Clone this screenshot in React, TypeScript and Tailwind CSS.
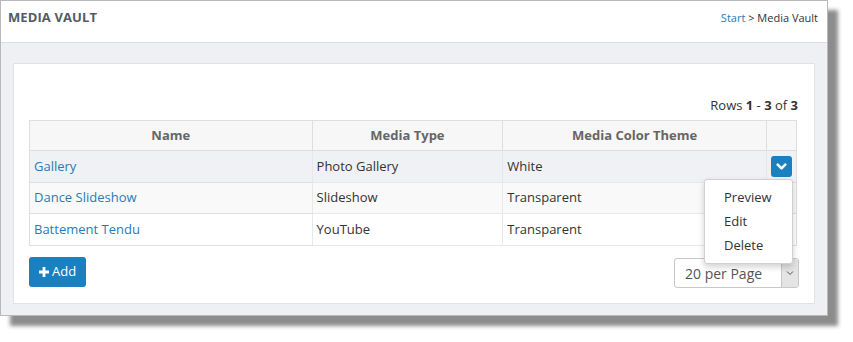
import { useState } from "react";

const rows = [
  { name: "Gallery", type: "Photo Gallery", theme: "White" },
  { name: "Dance Slideshow", type: "Slideshow", theme: "Transparent" },
  { name: "Battement Tendu", type: "YouTube", theme: "Transparent" },
];

const rowBg = ["bg-[#f0f1f5] h-[32px]", "bg-[#f9f9f9] h-[31px]", "bg-white h-[32px]"];

function Chevron({ className }: { className?: string }) {
  return (
    <svg viewBox="0 0 12 12" className={className} fill="none">
      <path d="M2.5 4.2 6 7.7 9.5 4.2" stroke="currentColor" strokeWidth="2.4" strokeLinecap="round" strokeLinejoin="round" />
    </svg>
  );
}

function App() {
  const [open] = useState(true);

  return (
    <div className="w-[853px] h-[342px] bg-white font-['Open_Sans',sans-serif] text-[13px] text-[#333]">
      <div className="w-[828px] h-[316px] border border-[#b9b9b9] bg-[#eff0f4] shadow-[10px_10px_4px_rgba(0,0,0,0.45)] flex flex-col">
        {/* header */}
        <div className="h-[42px] bg-white border-b border-[#dcdde2] flex items-center justify-between pl-[7px] pr-[9px] shrink-0">
          <h1 className="text-[13px] font-bold text-[#555a64] tracking-[0.1px] -mt-[8px]">MEDIA VAULT</h1>
          <div className="text-[11px] text-[#333] -mt-[6px]">
            <span className="text-[#2a7ab8]">Start</span> &gt; Media Vault
          </div>
        </div>

        {/* panel */}
        <div className="px-[12px] pt-[20px]">
          <div className="h-[241px] bg-white border border-[#e1e2e6] px-[15px] pt-[32px] relative">
            <div className="text-right text-[13px] h-[24px] pr-[1px]">
              Rows <b>1</b> - <b>3</b> of <b>3</b>
            </div>

            <table className="w-[768px] border-collapse text-[13px]">
              <thead>
                <tr className="bg-[#f7f7f7] h-[30px]">
                  <th className="w-[283px] border border-[#dedede] font-bold text-[#666]">Name</th>
                  <th className="w-[191px] border border-[#dedede] font-bold text-[#666]">Media Type</th>
                  <th className="w-[264px] border border-[#dedede] font-bold text-[#666]">Media Color Theme</th>
                  <th className="border border-[#dedede]"></th>
                </tr>
              </thead>
              <tbody>
                {rows.map((r, i) => (
                  <tr key={r.name} className={rowBg[i]}>
                    <td className="border-y border-l border-[#dedede] px-[4px] text-[#2a7ab8]">{r.name}</td>
                    <td className="border-y border-l border-[#e8e8e8] px-[4px]">{r.type}</td>
                    <td className="border-y border-x border-[#e8e8e8] px-[4px]">{r.theme}</td>
                    <td className="border-y border-r border-[#dedede] px-[4px]">
                      {i === 0 && (
                        <div className="w-[21px] h-[21px] bg-[#1a80bf] rounded-[3px] flex items-center justify-center text-white">
                          <Chevron className="w-[13px] h-[13px]" />
                        </div>
                      )}
                    </td>
                  </tr>
                ))}
              </tbody>
            </table>

            <div className="flex items-start justify-between mt-[11px]">
              <button className="h-[30px] px-[10px] bg-[#1a80bf] rounded-[3px] text-white text-[13px] flex items-center gap-[3px]">
                <svg viewBox="0 0 10 10" className="w-[10px] h-[10px]">
                  <path d="M3.6 0h2.8v3.6H10v2.8H6.4V10H3.6V6.4H0V3.6h3.6z" fill="currentColor" />
                </svg>
                Add
              </button>
              <div className="w-[125px] h-[30px] mt-[1px] border border-[#c8c8c8] rounded-[3px] flex overflow-hidden">
                <div className="flex-1 flex items-center pl-[10px] text-[14px] text-[#555]">20 per Page</div>
                <div className="w-[17px] bg-[#e4e4e4] border-l border-[#c8c8c8] flex items-center justify-center text-[#555]">
                  <svg viewBox="0 0 8 8" className="w-[8px] h-[8px]" fill="none">
                    <path d="M1 2.5 4 5.5 7 2.5" stroke="currentColor" strokeWidth="1" />
                  </svg>
                </div>
              </div>
            </div>

            {open && (
              <div className="absolute left-[690px] top-[115px] w-[89px] h-[85px] bg-white border border-[#d0d0d0] rounded-[3px] shadow-[0_3px_6px_rgba(0,0,0,0.18)] pt-[8px] pl-[19px] flex flex-col gap-[5px] text-[13px] text-[#333]">
                <div className="h-[19px]">Preview</div>
                <div className="h-[19px]">Edit</div>
                <div className="h-[19px]">Delete</div>
              </div>
            )}
          </div>
        </div>
      </div>
    </div>
  );
}

export default App;
